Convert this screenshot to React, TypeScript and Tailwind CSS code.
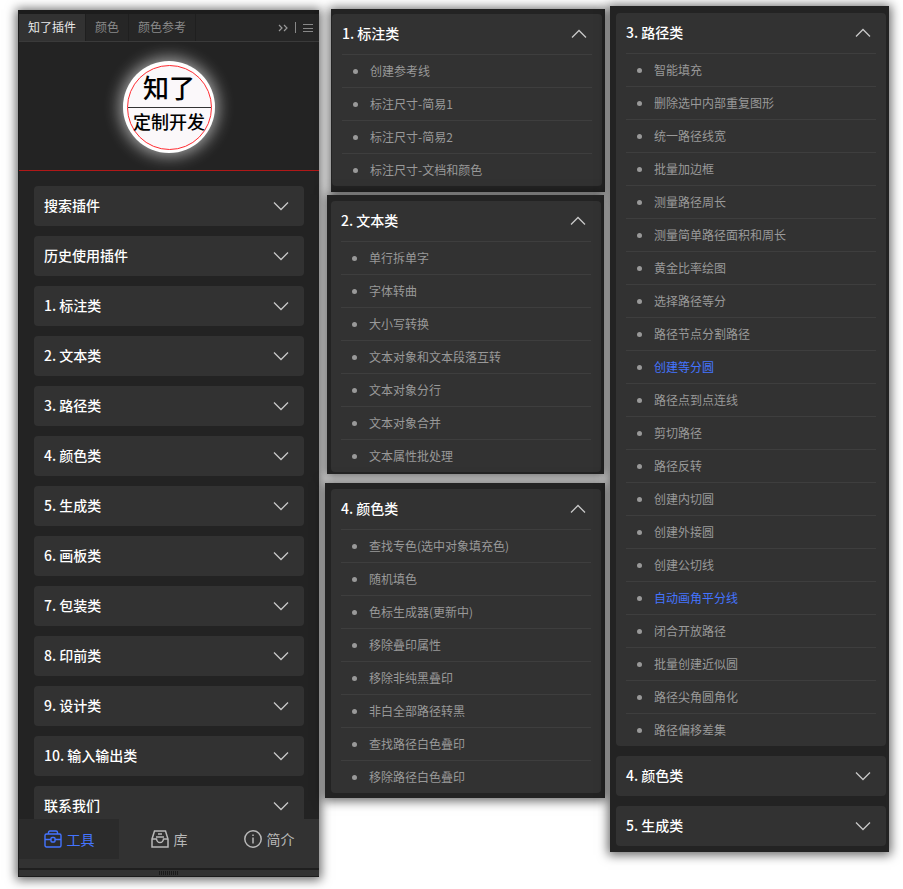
import { useState } from "react";

const LEFT_SECTIONS = [
  "搜索插件",
  "历史使用插件",
  "1. 标注类",
  "2. 文本类",
  "3. 路径类",
  "4. 颜色类",
  "5. 生成类",
  "6. 画板类",
  "7. 包装类",
  "8. 印前类",
  "9. 设计类",
  "10. 输入输出类",
  "联系我们",
];

const MARK_ITEMS = ["创建参考线", "标注尺寸-简易1", "标注尺寸-简易2", "标注尺寸-文档和颜色"];

const TEXT_ITEMS = [
  "单行拆单字",
  "字体转曲",
  "大小写转换",
  "文本对象和文本段落互转",
  "文本对象分行",
  "文本对象合并",
  "文本属性批处理",
];

const COLOR_ITEMS = [
  "查找专色(选中对象填充色)",
  "随机填色",
  "色标生成器(更新中)",
  "移除叠印属性",
  "移除非纯黑叠印",
  "非白全部路径转黑",
  "查找路径白色叠印",
  "移除路径白色叠印",
];

const PATH_ITEMS = [
  "智能填充",
  "删除选中内部重复图形",
  "统一路径线宽",
  "批量加边框",
  "测量路径周长",
  "测量简单路径面积和周长",
  "黄金比率绘图",
  "选择路径等分",
  "路径节点分割路径",
  "创建等分圆",
  "路径点到点连线",
  "剪切路径",
  "路径反转",
  "创建内切圆",
  "创建外接圆",
  "创建公切线",
  "自动画角平分线",
  "闭合开放路径",
  "批量创建近似圆",
  "路径尖角圆角化",
  "路径偏移差集",
];

const HIGHLIGHTED = ["创建等分圆", "自动画角平分线"];

function Chevron({ up }: { up?: boolean }) {
  return (
    <svg width="16" height="10" viewBox="0 0 16 10" fill="none" stroke="#c8c8c8" strokeWidth="1.3">
      <path d={up ? "M1 8.5 L8 1.5 L15 8.5" : "M1 1.5 L8 8.5 L15 1.5"} />
    </svg>
  );
}

function Section({ title, items }: { title: string; items?: string[] }) {
  const [open, setOpen] = useState(!!items);
  return (
    <section className="rounded bg-[#323232]">
      <button
        type="button"
        aria-expanded={open}
        onClick={() => setOpen(!open)}
        className="flex h-10 w-full items-center justify-between pr-[15px] pl-[10px] text-sm font-medium text-white"
      >
        <span className="pb-0.5">{title}</span>
        <Chevron up={open} />
      </button>
      {open && items && (
        <ul className="px-[10px]">
          {items.map((item) => (
            <li key={item} className="flex h-[33px] items-center border-t border-[#3e3e3e] pl-[11px]">
              <span className="mr-3 size-[5px] rounded-full bg-[#999]" />
              <button
                type="button"
                className={
                  HIGHLIGHTED.includes(item) ? "text-xs text-[#4474ff]" : "text-xs text-[#999]"
                }
              >
                {item}
              </button>
            </li>
          ))}
        </ul>
      )}
    </section>
  );
}

function Logo() {
  return (
    <div className="flex size-[92px] items-center justify-center rounded-full bg-white shadow-[0_0_16px_3px_rgba(255,255,255,0.6)]">
      <div className="flex size-[85px] flex-col items-center rounded-full border border-[#ff2a30] bg-[#fbf8fa] text-black">
        <span className="flex h-[41px] items-center text-[26px] font-medium">知了</span>
        <span className="h-px w-full shrink-0 bg-[#333]" />
        <span className="flex h-[27px] items-center text-lg font-medium whitespace-nowrap">定制开发</span>
      </div>
    </div>
  );
}

function ToolboxIcon() {
  return (
    <svg width="18" height="18" viewBox="0 0 18 18" fill="none" stroke="currentColor" strokeWidth="1.4">
      <rect x="1" y="4" width="16" height="13" rx="1.5" />
      <path d="M4.5 4V2.5Q4.5 1 6 1H12Q13.5 1 13.5 2.5V4" />
      <path d="M1 9.5H7M11 9.5H17" />
      <rect x="7" y="7.5" width="4" height="4.5" rx="1" />
    </svg>
  );
}

function LibraryIcon() {
  return (
    <svg width="18" height="18" viewBox="0 0 18 18" fill="none" stroke="currentColor" strokeWidth="1.5">
      <path d="M1 9L3.5 1H14.5L17 9V17H1Z" />
      <path d="M1 9H5.5Q6 12.500 9 12.500Q12 12.500 12.500 9H17" />
      <path d="M7 4H11M5 7H13" />
    </svg>
  );
}

function InfoIcon() {
  return (
    <svg width="18" height="18" viewBox="0 0 18 18" fill="none" stroke="currentColor" strokeWidth="1.5">
      <circle cx="9" cy="9" r="8.2" />
      <path d="M9 7.5V13.5M9 4.5V6" />
    </svg>
  );
}

const panel = "bg-[#232323] shadow-[0_1px_10px_2px_rgba(0,0,0,0.6)]";

export default function App() {
  return (
    <div className="grid grid-cols-[301fr_281fr_279fr] items-start gap-[5px] bg-white pt-[6px] pr-[14px] pb-3 pl-[18px] font-['Noto_Sans_CJK_SC',sans-serif]">
      <div className={`${panel} mt-1 border-b border-l border-[#1c1c1c]`}>
        <div className="h-1 bg-[#1c1c1c]" />
        <nav className="flex h-7 items-stretch border-b border-[#3a3a3a] bg-[#262626] text-xs text-[#8a8a8a]">
          <button type="button" className="border-r border-[#1f1f1f] bg-[#323232] px-[9px] pb-0.5 text-[#e8e8e8]">
            知了插件
          </button>
          <button type="button" className="border-r border-[#1f1f1f] px-[9px] pb-0.5">
            颜色
          </button>
          <button type="button" className="border-r border-[#1f1f1f] px-[9px] pb-0.5">
            颜色参考
          </button>
          <div className="ml-auto flex items-center gap-[7px] pr-[6px]">
            <button type="button" aria-label="展开">
              <svg width="10" height="8" viewBox="0 0 10 8" fill="none" stroke="#999" strokeWidth="1.2">
                <path d="M1 1L4 4L1 7M6 1L9 4L6 7" />
              </svg>
            </button>
            <span className="h-[11px] w-px bg-[#888]" />
            <button type="button" aria-label="菜单">
              <svg width="10" height="8" viewBox="0 0 10 8" fill="none" stroke="#888" shapeRendering="crispEdges">
                <path d="M0 0.5H10M0 4H10M0 7.5H10" />
              </svg>
            </button>
          </div>
        </nav>
        <header className="flex h-[129px] justify-center border-b border-[#b01818] pt-[19px]">
          <Logo />
        </header>
        <main className="flex max-h-[648px] flex-col gap-[10px] overflow-hidden px-[15px] pt-[15px]">
          {LEFT_SECTIONS.map((title) => (
            <div key={title} className="shrink-0">
              <Section title={title} />
            </div>
          ))}
        </main>
        <footer className="bg-[#323232]">
          <nav className="grid h-10 grid-cols-3 text-sm text-[#b8b8b8]">
            <button type="button" className="flex items-center justify-center gap-[5px] bg-[#2b2b2b] text-[#4474ff]">
              <ToolboxIcon />
              工具
            </button>
            <button type="button" className="flex items-center justify-center gap-[5px]">
              <LibraryIcon />库
            </button>
            <button type="button" className="flex items-center justify-center gap-[5px]">
              <InfoIcon />
              简介
            </button>
          </nav>
          <div className="mt-[9px] flex h-2 items-center justify-center border-t-2 border-[#1f1f1f]">
            <svg width="20" height="4" viewBox="0 0 20 4" stroke="#1a1a1a" shapeRendering="crispEdges">
              <path d="M0.5 0V4M2.5 0V4M4.5 0V4M6.5 0V4M8.5 0V4M10.5 0V4M12.5 0V4M14.5 0V4M16.5 0V4M18.5 0V4" />
            </svg>
          </div>
        </footer>
      </div>

      <div className="mt-[3px] flex flex-col">
        <div className={`${panel} ml-[7px] pt-[5px] pr-[3px] pb-[6px] pl-px`}>
          <Section title="1. 标注类" items={MARK_ITEMS} />
        </div>
        <div className={`${panel} mt-[3px] mr-px ml-[3px] pt-[6px] pr-[3px] pb-[2px] pl-1`}>
          <Section title="2. 文本类" items={TEXT_ITEMS} />
        </div>
        <div className={`${panel} mt-[9px] ml-px pt-[6px] pr-1 pb-[5px] pl-[6px]`}>
          <Section title="4. 颜色类" items={COLOR_ITEMS} />
        </div>
      </div>

      <div className={`${panel} flex flex-col gap-[10px] pt-[7px] pr-[3px] pb-[6px] pl-[6px]`}>
        <Section title="3. 路径类" items={PATH_ITEMS} />
        <Section title="4. 颜色类" />
        <Section title="5. 生成类" />
      </div>
    </div>
  );
}
